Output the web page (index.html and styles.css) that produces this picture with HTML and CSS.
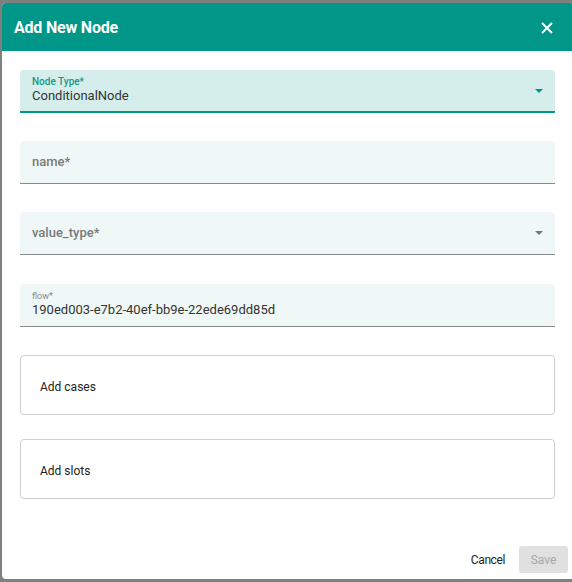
FILE: index.html
```html
<!DOCTYPE html>
<html>
<head>
<meta charset="utf-8">
<link rel="stylesheet" href="styles.css">
</head>
<body>
<div class="overlay">
  <div class="dialog">
    <div class="header">
      <span class="title">Add New Node</span>
      <svg class="close" width="12" height="12" viewBox="0 0 12 12"><path d="M1 1L11 11M11 1L1 11" stroke="#fff" stroke-width="2" fill="none"/></svg>
    </div>
    <div class="content">
      <div class="field focused">
        <div class="field-main">
          <div class="label label-teal">Node Type*</div>
          <div class="value">ConditionalNode</div>
        </div>
        <svg class="arrow" width="8" height="4" viewBox="0 0 8 4"><path d="M0 0L8 0L4 4Z" fill="#009688"/></svg>
      </div>
      <div class="field">
        <div class="field-main">
          <div class="placeholder">name*</div>
        </div>
      </div>
      <div class="field field-select">
        <div class="field-main">
          <div class="placeholder">value_type*</div>
        </div>
        <svg class="arrow" width="8" height="4" viewBox="0 0 8 4"><path d="M0 0L8 0L4 4Z" fill="#777"/></svg>
      </div>
      <div class="field field-flow">
        <div class="field-main">
          <div class="label label-small">flow*</div>
          <div class="value">190ed003-e7b2-40ef-bb9e-22ede69dd85d</div>
        </div>
      </div>
      <div class="box box-cases">Add cases</div>
      <div class="box box-slots">Add slots</div>
    </div>
    <div class="footer">
      <button class="btn-cancel">Cancel</button>
      <button class="btn-save">Save</button>
    </div>
  </div>
</div>
</body>
</html>
```

FILE: styles.css
```css
html, body {
  margin: 0;
  padding: 0;
}
body {
  width: 572px;
  height: 582px;
  overflow: hidden;
  background: #7f7f7f;
  font-family: Roboto, "Liberation Sans", sans-serif;
}
.overlay {
  padding: 3px 0 0 2px;
}
.dialog {
  width: 572px;
  height: 576px;
  background: #fff;
  border-radius: 4px;
  display: flex;
  flex-direction: column;
  overflow: hidden;
}
.header {
  height: 48px;
  flex: none;
  background: #009688;
  display: flex;
  align-items: center;
  justify-content: space-between;
  padding: 0 19px 0 12px;
  box-sizing: border-box;
  width: 570px;
}
.title {
  color: #fff;
  font-weight: 700;
  font-size: 16px;
  letter-spacing: -0.2px;
}
.close {
  display: block;
  margin-top: 1px;
}
.content {
  padding: 19px 0 0 18px;
  width: 535px;
  display: flex;
  flex-direction: column;
}
.field {
  height: 42px;
  background: #eff8f7;
  border-bottom: 1px solid #8a8a8a;
  border-radius: 4px 4px 0 0;
  padding: 0 12px;
  display: flex;
  align-items: center;
  margin-bottom: 28px;
}
.field.focused {
  height: 41px;
  background: #d6eeeb;
  border-bottom: 2px solid #009688;
  align-items: stretch;
}
.field-select {
  margin-bottom: 29px;
}
.field-main {
  flex: 1;
  display: flex;
  flex-direction: column;
}
.focused .field-main {
  padding-top: 6px;
}
.focused .arrow {
  align-self: center;
  margin-top: 1px;
}
.label {
  font-size: 10px;
  line-height: 12px;
}
.label-teal {
  color: #14998b;
  font-weight: 500;
}
.value {
  font-size: 13px;
  line-height: 16px;
  color: #333;
}
.placeholder {
  font-size: 13px;
  line-height: 16px;
  color: #7a7a7a;
  font-weight: 500;
}
.arrow {
  display: block;
  flex: none;
}
.field-flow {
  margin-bottom: 28px;
  align-items: stretch;
}
.field-flow .field-main {
  padding-top: 7px;
}
.label-small {
  font-size: 9px;
  line-height: 11px;
  color: #888;
}
.box {
  box-sizing: content-box;
  border: 1px solid #cfcfcf;
  border-radius: 4px;
  display: flex;
  align-items: center;
  padding-left: 19px;
  font-size: 12px;
  color: #222;
}
.box-cases {
  height: 55px;
  padding-top: 3px;
  margin-bottom: 24px;
}
.box-slots {
  height: 54px;
  padding-top: 4px;
}
.footer {
  margin-top: auto;
  display: flex;
  justify-content: flex-end;
  align-items: center;
  gap: 6px;
  padding: 0 4px 6px 0;
  width: 566px;
}
button {
  font-family: Roboto, "Liberation Sans", sans-serif;
  font-size: 12px;
  border: none;
  border-radius: 3px;
  cursor: pointer;
}
.btn-cancel {
  background: transparent;
  color: #222;
  padding: 0 8px;
  height: 27px;
  letter-spacing: -0.4px;
}
.btn-save {
  background: #e0e0e0;
  color: #a8a8a8;
  width: 49px;
  height: 27px;
  padding: 0;
}
```
